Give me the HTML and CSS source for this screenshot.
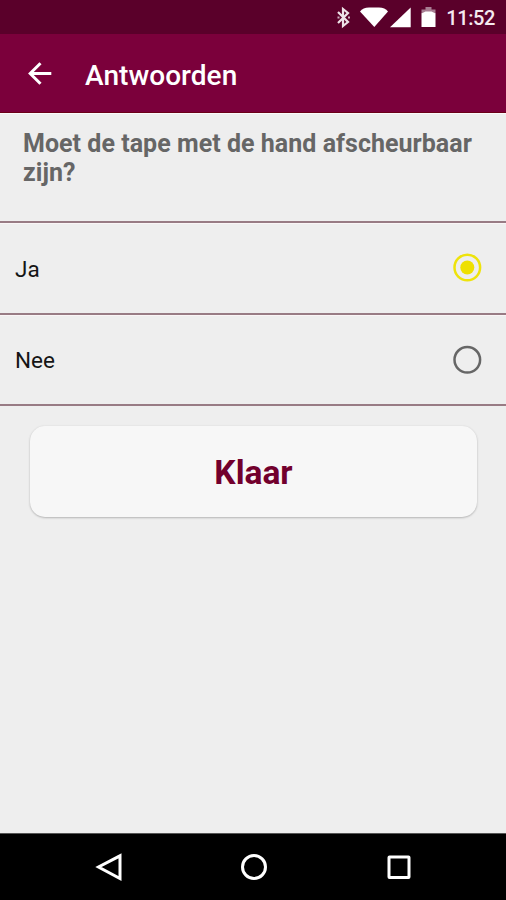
FILE: index.html
```html
<!DOCTYPE html>
<html lang="nl">
<head>
<meta charset="utf-8">
<title>Antwoorden</title>
<link rel="stylesheet" href="styles.css">
</head>
<body>
<div class="screen">
  <header class="status">
    <svg class="status-icons" width="102" height="34" viewBox="336 0 102 34">
      <path class="bluetooth" d="M339 12l10 10-5 4V9l5 4-10 10"/>
      <path class="dots" d="M338.5 16.5h2v2h-2zM349 16.5h2v2h-2z"/>
      <path class="solid" d="M361 11.500Q364 7.500 370 7.500H380Q386 7.500 389 11.500L375.300 27z"/>
      <path class="solid" d="M391 27.300L411.700 7.500V27.300z"/>
      <path class="faded" d="M422.500 14V9.500h4V7h6v2.500h4V14z"/>
      <path class="solid" d="M422.500 13.500l4-2h6l4 2V27h-14z"/>
    </svg>
    <span class="time">11:52</span>
  </header>
  <div class="appbar">
    <svg class="back" width="24" height="24" viewBox="0 0 24 24"><path d="M23.300 11.500H2M12.500 1.300L2.200 11.500l10.300 10.200"/></svg>
    <h1 class="title">Antwoorden</h1>
  </div>
  <main class="content">
    <h2 class="question">Moet de tape met de hand afscheurbaar zijn?</h2>
    <div class="option"><span>Ja</span>
      <svg class="radio checked" width="30" height="30" viewBox="0 0 30 30"><circle class="ring" cx="15.300" cy="14.500" r="12.800"/><circle class="dot" cx="15.300" cy="14.500" r="7"/></svg>
    </div>
    <div class="option"><span>Nee</span>
      <svg class="radio" width="30" height="30" viewBox="0 0 30 30"><circle class="ring" cx="15.300" cy="14.800" r="12.800"/></svg>
    </div>
    <button class="done">Klaar</button>
  </main>
  <nav class="navbar">
    <svg width="30" height="30" viewBox="0 0 30 30"><path d="M26 3.800V26.500L4.500 15z"/></svg>
    <svg width="30" height="30" viewBox="0 0 30 30"><circle cx="15" cy="15" r="11.500"/></svg>
    <svg width="30" height="30" viewBox="0 0 30 30"><rect x="5" y="5" width="20" height="20.500" rx=".5"/></svg>
  </nav>
</div>
</body>
</html>
```

FILE: styles.css
```css
* { box-sizing: border-box; }
body { margin: 0; background: #eee; font-family: Roboto, sans-serif; }
.screen { width: 506px; height: 900px; display: flex; flex-direction: column; overflow: hidden; }
.status { height: 34px; background: #5a002a; display: flex; align-items: center; justify-content: flex-end; padding-right: 11px; color: #fff; }
.status-icons { margin-right: 9px; }
.bluetooth { fill: none; stroke: #eee3e8; stroke-width: 2.2; }
.dots { fill: #cdb2c0; }
.solid { fill: #fff; }
.faded { fill: #a77d92; }
.time { font-size: 20px; font-weight: 500; letter-spacing: -.4px; line-height: 34px; padding-top: 2px; color: #f5e9ef; }
.appbar { height: 79px; background: #7b003b; border-bottom: 1px solid #6b0018; display: flex; align-items: center; padding: 1px 0 0 28px; color: #fff; }
.back { fill: none; stroke: #fff; stroke-width: 3; }
.title { margin: 4px 0 0 33px; font-size: 28px; font-weight: 500; line-height: 34px; letter-spacing: .05px; }
.content { flex: 1; display: flex; flex-direction: column; border-top: 1px solid #fafafa; }
.question { height: 109px; margin: 0; padding: 15px 20px 0 23px; font-size: 25px; line-height: 29px; font-weight: 700; letter-spacing: .03px; color: #666; border-bottom: 2px solid #987b84; }
.option { height: 91.500px; display: flex; align-items: center; justify-content: space-between; padding: 0 24px 0 15px; border-top: 1px solid #faf5f6; border-bottom: 2px solid #987b84; font-size: 22.500px; color: #151515; }
.option span { padding-top: 1px; }
.radio .ring { fill: none; stroke: #666; stroke-width: 2.5; }
.radio.checked .ring { stroke: #eee30b; }
.dot { fill: #eee000; }
.done { margin: 20px 29px 0 30px; height: 91px; border: 0; border-radius: 15px; background: #f7f7f7; box-shadow: 0 1px 2px #b8b8b8, 0 0 2px #ddd; font-family: inherit; font-size: 33.500px; font-weight: 700; color: #72002d; padding: 1px 0 0; }
.navbar { height: 67px; background: #000; border-top: 1px solid #555; display: flex; justify-content: space-between; align-items: center; padding: 0 92px 0 94px; }
.navbar svg { fill: none; stroke: #fff; stroke-width: 3; }
```
